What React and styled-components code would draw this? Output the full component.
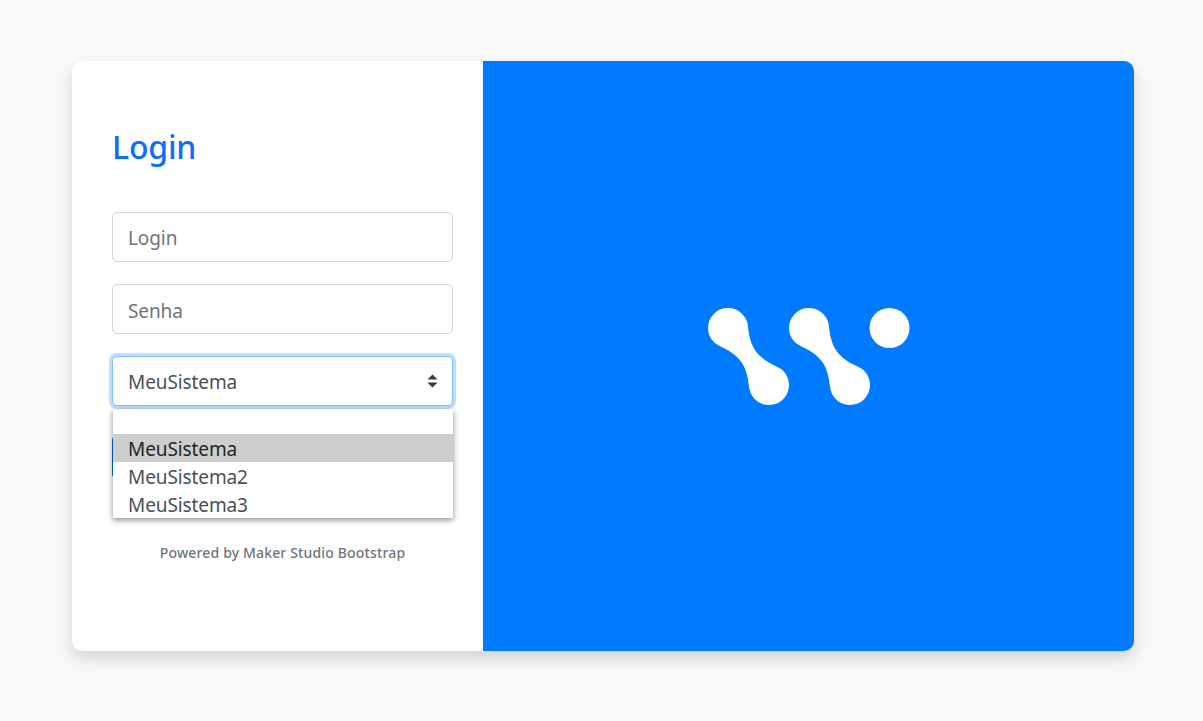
import React from "react";
import styled, { createGlobalStyle } from "styled-components";

const Global = createGlobalStyle`
  html, body { margin: 0; padding: 0; background: #f8f9fa; height: 100%; }
  * { box-sizing: border-box; }
  body { font-family: "Noto Sans", "Open Sans", sans-serif; overflow: hidden; }
`;

const Page = styled.div`
  width: 1203px;
  height: 721px;
  padding: 61px 69px 70px 72px;
  background: #f8f9fa;
`;

const Card = styled.main`
  display: flex;
  height: 590px;
  border-radius: 10px;
  overflow: hidden;
  background: #fff;
  box-shadow: 0 8px 16px rgba(0, 0, 0, 0.15);
`;

const FormPane = styled.section`
  width: 411px;
  flex: none;
  padding: 63px 30px 0 40px;
  display: flex;
  flex-direction: column;
`;

const Title = styled.h1`
  margin: 0 0 43px;
  font-size: 32px;
  line-height: 45px;
  font-weight: 500;
  letter-spacing: -0.2px;
  color: #0d6efd;
`;

const Field = styled.input`
  display: block;
  width: 100%;
  height: 50px;
  margin-bottom: 22px;
  padding: ${(p) => p.$textDrop}px 15px 0;
  border: 1px solid #ced4da;
  border-radius: 5px;
  background: #fff;
  font: 400 19px "Noto Sans", sans-serif;
  letter-spacing: -0.1px;
  color: #495057;
  outline: none;
  &::placeholder { color: #6c757d; opacity: 1; }
`;

const SelectWrap = styled.div`
  position: relative;
`;

const SelectBox = styled.button`
  display: flex;
  align-items: center;
  justify-content: space-between;
  width: 100%;
  height: 50px;
  padding: 2px 15px 0;
  border: 1px solid #80bdff;
  border-radius: 5px;
  background: #fff;
  box-shadow: 0 0 0 3px rgba(0, 123, 255, 0.25);
  font: 400 19px "Noto Sans", sans-serif;
  letter-spacing: -0.1px;
  color: #495057;
  outline: none;
`;

const Arrows = styled.svg`
  display: block;
  margin: -2px -1px 0 0;
`;

const Menu = styled.ul`
  position: absolute;
  z-index: 2;
  top: 53px;
  left: 1px;
  right: 0;
  height: 109px;
  margin: 0;
  padding: 25px 0 0;
  list-style: none;
  overflow: hidden;
  background: #fff;
  box-shadow: 0 2px 6px rgba(0, 0, 0, 0.45);
`;

const Option = styled.li`
  height: 28px;
  padding-left: 15px;
  font-size: 19px;
  line-height: 31px;
  letter-spacing: -0.1px;
  color: ${(p) => (p.$active ? "#212529" : "#495057")};
  background: ${(p) => (p.$active ? "#cecece" : "transparent")};
`;

const Submit = styled.button`
  display: block;
  width: 100%;
  height: 44px;
  margin-top: 29px;
  border: 1px solid #0069d9;
  border-radius: 5px;
  background: #007bff;
  color: #fff;
  font: 400 16px "Noto Sans", sans-serif;
`;

const Footer = styled.p`
  margin: 64px 0 0;
  text-align: center;
  font-size: 14px;
  line-height: 20px;
  font-weight: 500;
  letter-spacing: 0.15px;
  color: #6c757d;
`;

const BrandPane = styled.section`
  flex: 1;
  display: flex;
  align-items: center;
  justify-content: center;
  background: #007bff;
`;

const Logo = styled.svg`
  display: block;
  width: 202px;
  height: 97px;
  overflow: visible;
`;

const blob =
  "M0 20A20 20 0 0 1 39.8 17.2C41.8 33 43.4 47.5 69 58.7A20 20 0 1 1 41.2 79.8C39.2 64 37.6 49.5 12 38.3A20 20 0 0 1 0 20Z";

export default function App() {
  return (
    <>
      <Global />
      <Page>
        <Card>
          <FormPane>
            <Title>Login</Title>
            <Field $textDrop={2} placeholder="Login" />
            <Field $textDrop={4} placeholder="Senha" />
            <SelectWrap>
              <SelectBox type="button">
                <span>MeuSistema</span>
                <Arrows width="11" height="14" viewBox="0 0 11 14" fill="#343a40">
                  <path d="M5.5 0.5 10.5 5.5H0.5ZM5.5 13.5 0.5 8.5H10.5Z" />
                </Arrows>
              </SelectBox>
              <Menu>
                <Option $active>MeuSistema</Option>
                <Option>MeuSistema2</Option>
                <Option>MeuSistema3</Option>
              </Menu>
              <Submit type="button">Entrar</Submit>
            </SelectWrap>
            <Footer>Powered by Maker Studio Bootstrap</Footer>
          </FormPane>
          <BrandPane>
            <Logo viewBox="0 0 202 97" fill="#fff">
              <path d={blob} />
              <path d={blob} transform="translate(81 0)" />
              <circle cx="181.5" cy="20" r="20" />
            </Logo>
          </BrandPane>
        </Card>
      </Page>
    </>
  );
}
